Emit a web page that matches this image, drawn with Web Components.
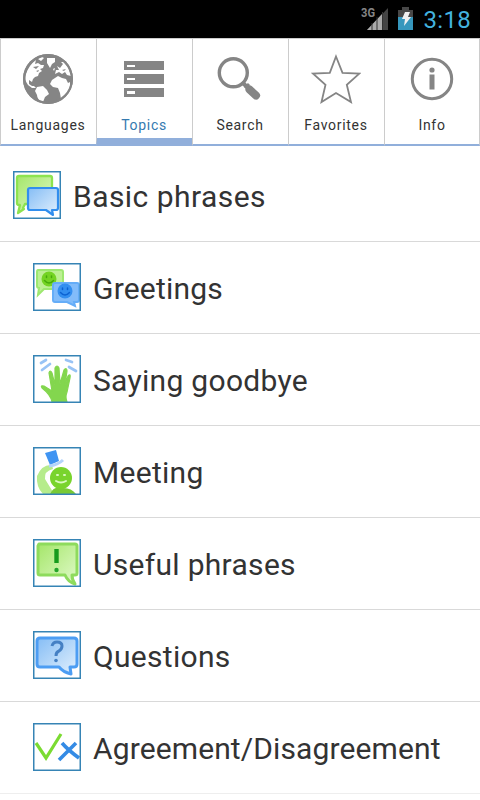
<!DOCTYPE html>
<html lang="en"><head><meta charset="utf-8"><title>Phrasebook</title>
<style>html,body{margin:0;background:#fff}body{width:480px;height:800px;overflow:hidden;font-family:Roboto,sans-serif}</style></head>
<body><phrase-app></phrase-app>
<script>
const TAB_ICONS={
languages:`<circle cx="25" cy="25" r="25" fill="#858585"/><g fill="#fff"><path d="M3 20Q6 11 13 6L12 10 15 9 18 11 21 11 20 14 17 15 19 17 16 19 15 22 12 23 10 25 9 28 6 26 6 30 9 32 11 32 13 34 9 34 5 31Q1 26 3 20Z"/><path d="M24 4L32 4 32 8 29 10 27 14 24 9Z"/><path d="M14 33L20 32 24 36 26 40 22 43 20 48Q14 46 14 41L12 37Z"/><path d="M29 26L35 22 39 24 43 25 45 29 47 28Q48 35 41 44L38 45 37 39 35 34 30 33 27 30Z"/><path d="M34 12L37 14 40 10 38 8 41 8Q46 13 48 22L44 21 42 18 39 20 36 18 32 20 33 16 36 16Z"/><path d="M30 15L32 14 31 17ZM15 5l4-2 2 1-3 3z"/></g><path d="M10 13l6-1-3 3zM13 17l3-1-1 2zM39 16l4-1-2 2zM36 21l7 1-1 1-5-1z" fill="#858585"/><circle cx="25" cy="25" r="23.9" fill="none" stroke="#858585" stroke-width="2.2"/>`,
topics:`<path fill="#858585" d="M5 7h40v9H5zM5 20h40v10H5zM5 34h40v9H5z"/><path fill="#fff" d="M8 11h8v2H8zM8 24h8v2H8zM8 37h8v3H8z"/>`,
search:`<circle cx="18.3" cy="18.8" r="14" fill="none" stroke="#858585" stroke-width="3.4"/><path d="M27 28l5 5" stroke="#858585" stroke-width="4"/><path d="M34.5 35.5l6.5 6" stroke="#858585" stroke-width="8" stroke-linecap="round"/><path d="M30 34l4-4" stroke="#858585" stroke-width="3"/>`,
favorites:`<path d="M25 2.5L31.5 18.8 48.5 19.5 35.8 30.8 40 48 25 39 10.5 48 14.5 30.8 1.8 19.5 18.8 18.8Z" fill="none" stroke="#858585" stroke-width="1.8"/>`,
info:`<circle cx="25" cy="25" r="19.7" fill="none" stroke="#858585" stroke-width="3"/><circle cx="25" cy="16" r="2.6" fill="#858585"/><path fill="#858585" d="M22.5 20.5h5v15h-5z"/>`};
const DEFS=`<defs><linearGradient id="g" x2="1" y2="1"><stop stop-color="#a5e66a"/><stop offset="1" stop-color="#e0fac9"/></linearGradient><linearGradient id="b" x2="1" y2="1"><stop stop-color="#85bdf5"/><stop offset="1" stop-color="#e2f0fd"/></linearGradient></defs>`;
const smile=(x,y,c,d)=>`<circle cx="${x}" cy="${y}" r="7.5" fill="${c}"/><g fill="none" stroke="${d}" stroke-width="1.5" stroke-linecap="round"><path d="M${x-2.5} ${y-3}v1.5M${x+2.5} ${y-3}v1.5M${x-4.5} ${y+1.5}q4.5 5 9 0"/></g>`;
const ROW_ICONS={
basic:`<path d="M6 5h31q2 0 2 2v24q0 2-2 2H12l-2 4 1 1-6 4 2-8H6q-2 0-2-2V7q0-2 2-2Z" fill="url(#g)" stroke="#8de34f" stroke-width="2.3" stroke-linejoin="round"/><path d="M17 17h26q2 0 2 2v18q0 2-2 2h-4l1 5-7-5H17q-2 0-2-2V19q0-2 2-2Z" fill="url(#b)" stroke="#318eee" stroke-width="2.2" stroke-linejoin="round"/>`,
greetings:`<path d="M5 7h23q2 0 2 2v15q0 2-2 2H11l-6 6 1-7q-2 0-2-2V9q0-2 1-2Z" fill="#bdf094" stroke="#9de870" stroke-width="2"/>${smile(16,16,'#74d323','#46aa0b')}<path d="M22 20h22q2 0 2 2v15q0 2-2 2h-3l1 4-8-4H22q-2 0-2-2V22q0-2 2-2Z" fill="#82bcfa" stroke="#65adf8" stroke-width="2"/>${smile(32,28,'#338ff0','#0d63d2')}`,
goodbye:`<g stroke="#98c3f5" stroke-width="2.7" stroke-linecap="round"><path d="M8 8l5-3M9 15l8-6M33 5l6 2M36 12l7 4"/></g><path d="M19 47Q18 40 9 33Q7 30 11 31L19 36 16 18Q17 14 19 18L22 30 22 13Q24 9 26 13L27 29 31 15Q34 12 34 16L32 30 35 21Q38 18 37 23L34 37Q32 42 34 47Z" fill="#83d64e" stroke="#83d64e" stroke-width="1.2" stroke-linejoin="round"/>`,
meeting:`<path d="M4 29Q9 17 19 18L20 22Q11 24 12 32L20 45 18 47H10Q3 40 4 29Z" fill="#b6ec8c"/><path d="M12 6l11-3 3 11-9 4Z" fill="#3f94f2"/><path d="M16 19q9-1 14-6" fill="none" stroke="#b4d4fa" stroke-width="3"/><path d="M17 47q4-8 11-6 10-1 15 6Z" fill="#79ca35"/><circle cx="28" cy="31" r="11" fill="#79d42d"/><g fill="none" stroke="#d9fac0" stroke-width="2" stroke-linecap="round"><path d="M24 28h1M31 28h1M23 34q5 3 10 0"/></g>`,
useful:`<path d="M6 5h36q2 0 2 2v27q0 2-2 2h-3q0 5 3 9-7-2-10-9H7q-2 0-2-2V7Z" fill="url(#g)" stroke="#8edb5d" stroke-width="3" stroke-linejoin="round"/><path d="M23.5 10v14" stroke="#169b1c" stroke-width="4.4"/><circle cx="23.5" cy="31" r="2.2" fill="#25a52a"/>`,
questions:`<path d="M7 7h34q3 0 3 3v23q0 3-3 3h-4l1 7q-8-2-12-7H7q-3 0-3-3V10q0-3 3-3Z" fill="url(#b)" stroke="#4c9df3" stroke-width="3" stroke-linejoin="round"/><path d="M19 15q1-4 5-4 5 0 5 4 0 3-3 5-3 1-3 5" fill="none" stroke="#4580c4" stroke-width="3"/><circle cx="23" cy="29.5" r="1.8" fill="#4580c4"/>`,
agreement:`<path d="M3 20l10 15L28 11" fill="none" stroke="#7bdb32" stroke-width="3.2"/><path d="M29 20q6 7 17 15M43 20L26 37" fill="none" stroke="#348be5" stroke-width="3.6"/>`};
class StatusBar extends HTMLElement{connectedCallback(){this.attachShadow({mode:'open'}).innerHTML=`<style>:host{display:flex;height:38px;background:#000;justify-content:flex-end;align-items:center;padding-right:9px;box-sizing:border-box}svg{display:block;margin-right:9px}time{font:24px/38px Roboto,sans-serif;color:#43b2df;letter-spacing:.3px;padding-top:2px}.net{font:bold 12px Roboto,sans-serif;fill:#858585}</style>
<svg width="54" height="38"><text class="net" x="0" y="17" textLength="14" lengthAdjust="spacingAndGlyphs">3G</text><path d="M6 30L27 8V30Z" fill="#444"/><path d="M6 30L21 14V30Z" fill="#aaa"/><path d="M11 23v7M16 17v13M21.5 12v18" stroke="#333" stroke-width="1"/><path d="M37 10h4V7h7v3h4v20H37z" fill="#484848"/><path d="M37 17h15v13H37z" fill="#3697bd"/><path d="M44 12h5l-2 5h3l-7 9 1-7h-3z" fill="#f1f1f1"/></svg><time>3:18</time>`}}
customElements.define('status-bar',StatusBar);
class NavTab extends HTMLElement{connectedCallback(){this.attachShadow({mode:'open'}).innerHTML=`<style>:host{display:flex;flex-direction:column;align-items:center;box-sizing:border-box;border-left:1px solid #ccc;border-bottom:2px solid #91afdb;color:#333;padding:15px 1px 0 0}:host(:last-child){border-right:1px solid #ccc;padding-right:0}:host([active]){color:#357ab0;border-bottom-width:8px}svg{display:block;flex:none}span{font:14px/20px Roboto,sans-serif;letter-spacing:.7px;margin-top:11px;white-space:nowrap}</style><svg width="50" height="50" viewBox="0 0 50 50">${TAB_ICONS[this.getAttribute('icon')]}</svg><span><slot></slot></span>`}}
customElements.define('nav-tab',NavTab);
class TabBar extends HTMLElement{connectedCallback(){this.attachShadow({mode:'open'}).innerHTML=`<style>:host{display:grid;grid-template-columns:repeat(5,minmax(0,1fr));height:108px;box-sizing:border-box;border-top:1px solid #ccc}</style><slot></slot>`}}
customElements.define('tab-bar',TabBar);
class TopicRow extends HTMLElement{connectedCallback(){this.attachShadow({mode:'open'}).innerHTML=`<style>:host{display:flex;align-items:center;height:92px;box-sizing:border-box;border-bottom:1px solid #d9d9d9;padding:0 0 1px 33px;gap:12px;color:#333}:host([root]){padding-left:13px}:host(:last-child){border-color:#eee}svg{display:block;flex:none}span{font:30px/40px Roboto,sans-serif;letter-spacing:var(--track,.3px);padding-top:3px;white-space:nowrap}</style><svg width="48" height="48" viewBox="0 0 48 48">${DEFS}${ROW_ICONS[this.getAttribute('icon')]}<rect x=".75" y=".75" width="46.5" height="46.5" fill="none" stroke="#3684b5" stroke-width="1.5"/></svg><span><slot></slot></span>`}}
customElements.define('topic-row',TopicRow);
class PhraseApp extends HTMLElement{connectedCallback(){this.attachShadow({mode:'open'}).innerHTML=`<style>:host{display:flex;flex-direction:column;width:480px;height:800px;background:#fff}main{padding-top:4px}[icon=basic]{--track:.45px}[icon=greetings]{--track:.2px}[icon=agreement]{--track:.12px}</style><status-bar></status-bar><tab-bar><nav-tab icon="languages">Languages</nav-tab><nav-tab icon="topics" active>Topics</nav-tab><nav-tab icon="search">Search</nav-tab><nav-tab icon="favorites">Favorites</nav-tab><nav-tab icon="info">Info</nav-tab></tab-bar><main><topic-row root icon="basic">Basic phrases</topic-row><topic-row icon="greetings">Greetings</topic-row><topic-row icon="goodbye">Saying goodbye</topic-row><topic-row icon="meeting">Meeting</topic-row><topic-row icon="useful">Useful phrases</topic-row><topic-row icon="questions">Questions</topic-row><topic-row icon="agreement">Agreement/Disagreement</topic-row></main>`}}
customElements.define('phrase-app',PhraseApp);
</script></body></html>
